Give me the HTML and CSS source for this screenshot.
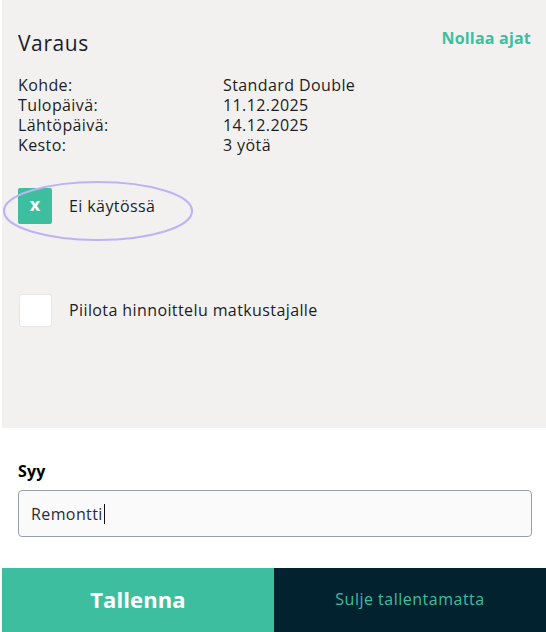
FILE: index.html
```html
<!DOCTYPE html>
<html lang="fi">
<head>
<meta charset="utf-8">
<link rel="stylesheet" href="styles.css">
</head>
<body>
<div class="page">
  <section class="panel">
    <div class="panel-head">
      <h1 class="title">Varaus</h1>
      <a class="reset">Nollaa ajat</a>
    </div>
    <dl class="details">
      <dt>Kohde:</dt><dd>Standard Double</dd>
      <dt>Tulopäivä:</dt><dd>11.12.2025</dd>
      <dt>Lähtöpäivä:</dt><dd>14.12.2025</dd>
      <dt>Kesto:</dt><dd>3 yötä</dd>
    </dl>
    <div class="option option-active">
      <span class="box box-checked">x</span>
      <span class="option-label">Ei käytössä</span>
      <svg class="ring" width="192" height="62" viewBox="0 0 192 62"><ellipse cx="96" cy="31" rx="94" ry="29" fill="none" stroke="#bdb3f6" stroke-width="2.2"/></svg>
    </div>
    <div class="option option-hide">
      <span class="box"></span>
      <span class="option-label">Piilota hinnoittelu matkustajalle</span>
    </div>
  </section>
  <section class="reason">
    <label class="reason-label">Syy</label>
    <div class="input"><span>Remontti</span><span class="caret"></span></div>
  </section>
  <footer class="actions">
    <button class="btn btn-save">Tallenna</button>
    <button class="btn btn-close">Sulje tallentamatta</button>
  </footer>
</div>
</body>
</html>
```
FILE: styles.css
```css
* { box-sizing: border-box; }
html, body { margin: 0; padding: 0; background: #fff; }
body {
  font-family: "Open Sans", "Noto Sans", sans-serif;
  color: #1c1d26;
  width: 546px;
  height: 632px;
  overflow: hidden;
  letter-spacing: 0.4px;
}
.page { padding-left: 2px; display: flex; flex-direction: column; height: 632px; }
.panel {
  background: #f2f1ef;
  height: 428px;
  padding: 26px 15px 0 16px;
}
.panel-head { display: flex; justify-content: space-between; align-items: flex-start; }
.title { margin: 4px 0 0; font-size: 21px; font-weight: 400; line-height: 26px; color: #1a1c2a; letter-spacing: 0.6px; }
.reset { color: #3dbf9f; font-weight: 700; font-size: 16px; line-height: 20px; margin-top: 2px; letter-spacing: 0.2px; }
.details {
  display: grid;
  grid-template-columns: 205px 1fr;
  margin: 19px 0 0;
  font-size: 16px;
  line-height: 20px;
}
.details dt, .details dd { margin: 0; }
.option { display: flex; align-items: center; position: relative; font-size: 16px; }
.option-active { margin-top: 33px; height: 36px; }
.option-hide { margin-top: 69px; height: 34px; }
.box {
  width: 34px; height: 36px;
  background: #fff;
  border-radius: 2px;
  display: flex; align-items: center; justify-content: center;
  flex-shrink: 0;
}
.option-hide .box { width: 33px; height: 33px; margin-left: 1px; border: 1px solid #e6e6e6; border-radius: 3px; }
.box-checked { background: #3dbf9f; color: #fff; font-weight: 700; font-size: 18px; line-height: 1; padding-bottom: 4px; letter-spacing: 0; }
.option-label { margin-left: 17px; }
.ring { position: absolute; left: -16px; top: -8px; }
.reason { padding: 33px 14px 0 16px; height: 140px; }
.reason-label { display: block; font-weight: 700; font-size: 16px; line-height: 20px; color: #000; letter-spacing: 0.2px; }
.input {
  margin-top: 9px;
  height: 47px;
  border: 1px solid #9aa0ab;
  border-radius: 4px;
  background: #fafafa;
  display: flex; align-items: center;
  padding-left: 12px;
  font-size: 16px;
  color: #2a2c38;
}
.caret { width: 1px; height: 20px; background: #111; margin-left: 1px; }
.actions { display: flex; height: 64px; }
.btn { border: 0; margin: 0; font-family: inherit; height: 64px; padding: 0 0 2px; }
.btn-save { width: 272px; background: #3dbf9f; color: #fff; font-weight: 700; font-size: 22px; letter-spacing: 0.1px; }
.btn-close { flex: 1; background: #03222f; color: #3dbf9f; font-size: 16px; letter-spacing: 0.5px; }
```
